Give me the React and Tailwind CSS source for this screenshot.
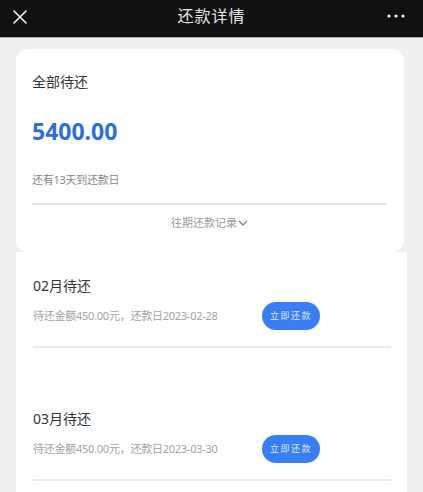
import React from "react";

const font = { fontFamily: '"Noto Sans", "Noto Sans CJK SC", sans-serif' };

function Item({ month, date }) {
  return (
    <div className="pt-[24px] pb-[37px]">
      <div className="text-[14px] leading-[20px] text-[#333]">{month}月待还</div>
      <div className="mt-[6px] flex items-center h-[28px]">
        <div className="text-[11px] leading-[16px] tracking-[-0.25px] text-[#a3a3a3] w-[229px] whitespace-nowrap">
          待还金额450.00元，还款日{date}
        </div>
        <div className="w-[58px] h-[28px] rounded-full bg-[#3a7ef3] flex items-center justify-center text-[9px] text-[#dce8ff] tracking-[1.5px]">
          立即还款
        </div>
      </div>
      <div className="mt-[16px] mr-[16px] h-[2px] bg-[#ebebeb]"></div>
    </div>
  );
}

export default function App() {
  return (
    <div className="w-[423px] h-[492px] overflow-hidden bg-[#f0f0f0]" style={font}>
      <div className="h-[38px] bg-[#111111] border-b border-[#a8a8a8] flex items-center justify-between px-[13px] relative">
        <svg width="14" height="14" viewBox="0 0 14 14" className="mt-[-4px]">
          <path d="M1 1 L13 13 M13 1 L1 13" stroke="#f2f2f2" strokeWidth="1.6" strokeLinecap="round" />
        </svg>
        <div className="absolute left-0 right-0 top-[5px] text-center text-[16px] leading-[22px] text-[#e6e6e6] tracking-[1px] pointer-events-none">
          还款详情
        </div>
        <svg width="18" height="4" viewBox="0 0 18 4" className="mr-[5px] mt-[-6px]">
          <circle cx="2" cy="2" r="1.6" fill="#f2f2f2" />
          <circle cx="9" cy="2" r="1.6" fill="#f2f2f2" />
          <circle cx="16" cy="2" r="1.6" fill="#f2f2f2" />
        </svg>
      </div>

      <div className="mt-[11px] ml-[16px] w-[388px] bg-white rounded-[12px] pl-[16px] pr-[17px] pt-[23px] pb-[21px]">
        <div className="text-[14px] leading-[20px] text-[#333]">全部待还</div>
        <div className="mt-[23px] text-[23px] leading-[32px] font-bold text-[#2b6fdc]">5400.00</div>
        <div className="mt-[25px] text-[11px] leading-[16px] tracking-[-0.25px] text-[#888]">还有13天到还款日</div>
        <div className="mt-[15px] h-[2px] bg-[#e3e3e3]"></div>
        <div className="mt-[10px] flex items-center justify-center text-[11px] leading-[16px] text-[#9a9a9a]">
          <span>往期还款记录</span>
          <svg width="10" height="8" viewBox="0 0 10 8" className="ml-[1px]">
            <path d="M1 2 L5 6 L9 2" stroke="#888" strokeWidth="1.4" fill="none" />
          </svg>
        </div>
      </div>

      <div className="ml-[16px] w-[391px] bg-white pl-[17px] h-[300px]">
        <Item month="02" date="2023-02-28" />
        <Item month="03" date="2023-03-30" />
      </div>
    </div>
  );
}
